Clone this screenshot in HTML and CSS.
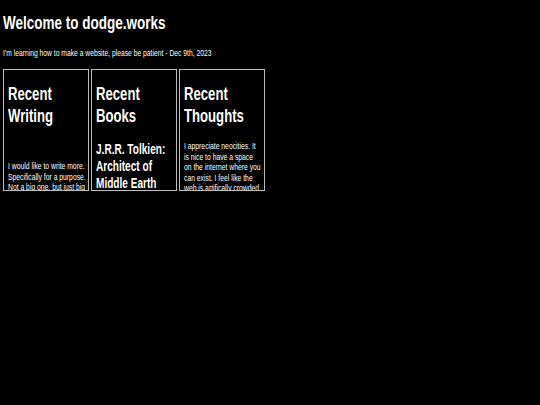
FILE: index.html
```html
<!DOCTYPE html>
<html>
<head>
<meta charset="utf-8">
<link rel="stylesheet" href="styles.css">
</head>
<body>
<h1 class="title">Welcome to dodge.works</h1>
<p class="sub">I'm learning how to make a website, please be patient - Dec 9th, 2023</p>
<div class="boxes">
  <div class="box">
    <h2 class="box-head">Recent<br>Writing</h2>
    <p class="box-text spaced">I would like to write more.<br>Specifically for a purpose.<br>Not a big one, but just big<br>enough to keep me going.</p>
  </div>
  <div class="box">
    <h2 class="box-head">Recent<br>Books</h2>
    <h3 class="box-sub">J.R.R. Tolkien:<br>Architect of<br>Middle Earth</h3>
  </div>
  <div class="box">
    <h2 class="box-head">Recent<br>Thoughts</h2>
    <p class="box-text">I appreciate neocities. It<br>is nice to have a space<br>on the internet where you<br>can exist. I feel like the<br>web is artifically crowded.</p>
  </div>
</div>
</body>
</html>
```
FILE: styles.css
```css
html, body {
  background: #000;
  color: #fff;
}
body {
  margin: 0;
  padding: 0 3px;
  font-family: "Liberation Sans", Arial, sans-serif;
}
.title,
.sub,
.box-head,
.box-sub,
.box-text {
  white-space: nowrap;
  transform-origin: 0 0;
}
.title {
  font-size: 19px;
  font-weight: bold;
  margin: 0;
  padding-top: 12px;
  line-height: 22px;
  transform: scaleX(0.71);
}
.sub {
  font-size: 9px;
  margin: 13px 0 0;
  line-height: 12px;
  transform: scaleX(0.75);
}
.boxes {
  display: flex;
  gap: 2px;
  margin-top: 10px;
}
.box {
  width: 86px;
  height: 122px;
  box-sizing: border-box;
  border: 1px solid #bbb;
  padding: 0 4px;
  overflow: hidden;
}
.box-head {
  font-size: 18px;
  font-weight: bold;
  line-height: 22px;
  margin: 13px 0 0;
  transform: scaleX(0.73);
}
.box-sub {
  font-size: 14px;
  font-weight: bold;
  line-height: 17px;
  margin: 14px 0 0;
  transform: scaleX(0.72);
}
.box-text {
  font-size: 9.3px;
  line-height: 10.5px;
  margin: 14px 0 0;
  transform: scaleX(0.73);
}
.box-text.spaced {
  margin-top: 34px;
}
```
